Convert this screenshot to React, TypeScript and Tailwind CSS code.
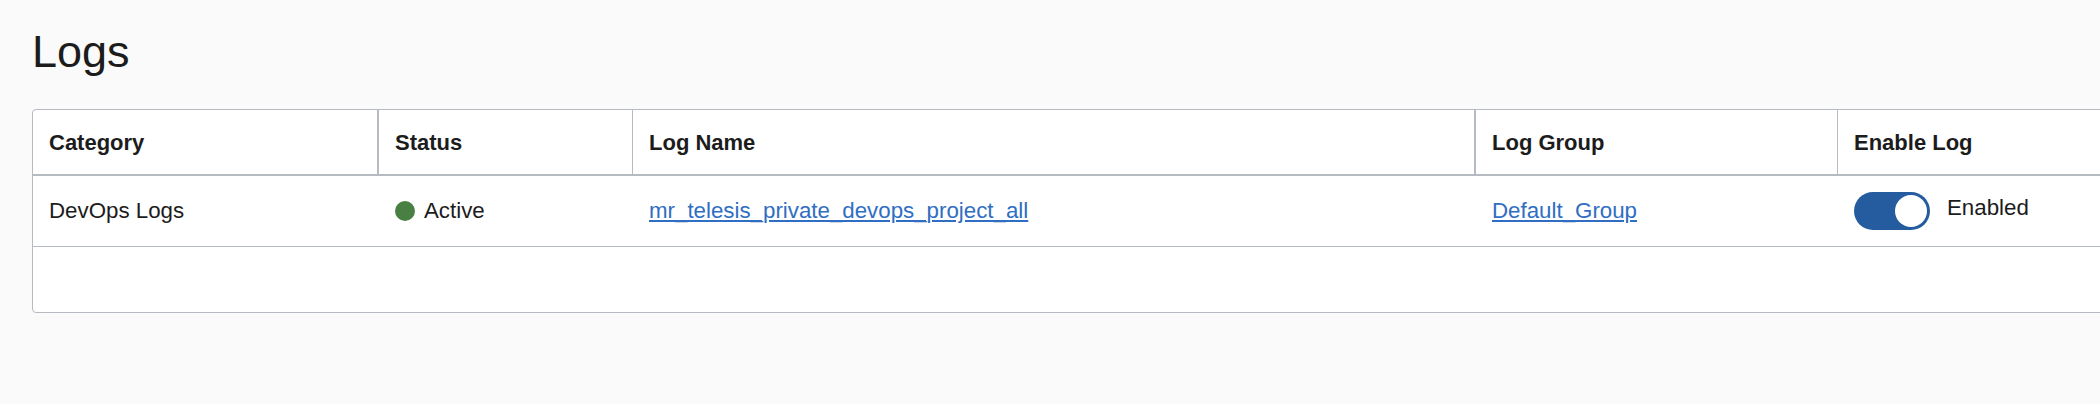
const columns = ["Category", "Status", "Log Name", "Log Group", "Enable Log"]

const headerBorders = [
  "border-r-2 border-[#b6bac1]",
  "border-r border-[#b6bac1]",
  "border-r-2 border-[#b6bac1]",
  "border-r border-[#b6bac1]",
  "",
]

const Toggle = () => {
  return (
    <div className="w-[76px] h-[38px] rounded-full bg-[#245c9f] flex items-center justify-end pr-[3px]">
      <div className="w-[32px] h-[32px] rounded-full bg-white"></div>
    </div>
  )
}

const App = () => {
  return (
    <div className="w-[2100px] h-[404px] overflow-hidden bg-[#fafafa] pl-8 pt-[30px] font-['Liberation_Sans',Arial,sans-serif] text-[#1c1c1c]">
      <h1 className="text-[45px] leading-[44px] font-normal">Logs</h1>

      <div className="mt-[35px] w-[2300px] bg-white border border-[#b6bac1] rounded-[4px]">
        {/* header */}
        <div className="grid grid-cols-[346px_254px_843px_362px_1fr] h-[66px] border-b-2 border-[#b6bac1]">
          {columns.map((col, i) => (
            <div key={col} className={`flex items-center pl-4 text-[22px] font-bold ${headerBorders[i]}`}>
              {col}
            </div>
          ))}
        </div>

        {/* row */}
        <div className="grid grid-cols-[346px_254px_843px_362px_1fr] h-[71px] border-b border-[#b6bac1] text-[22.3px]">
          <div className="flex items-center pl-4">DevOps Logs</div>
          <div className="flex items-center pl-4 gap-[9px]">
            <span className="w-[20px] h-[20px] rounded-full bg-[#4a7f43]"></span>
            <span>Active</span>
          </div>
          <div className="flex items-center pl-4">
            <a href="#" className="text-[#2f6ec2] underline underline-offset-2">mr_telesis_private_devops_project_all</a>
          </div>
          <div className="flex items-center pl-4">
            <a href="#" className="text-[#2f6ec2] underline underline-offset-2">Default_Group</a>
          </div>
          <div className="flex items-center pl-4 gap-[17px]">
            <Toggle />
            <span className="mb-[6px]">Enabled</span>
          </div>
        </div>

        <div className="h-[65px]"></div>
      </div>
    </div>
  )
}

export default App
